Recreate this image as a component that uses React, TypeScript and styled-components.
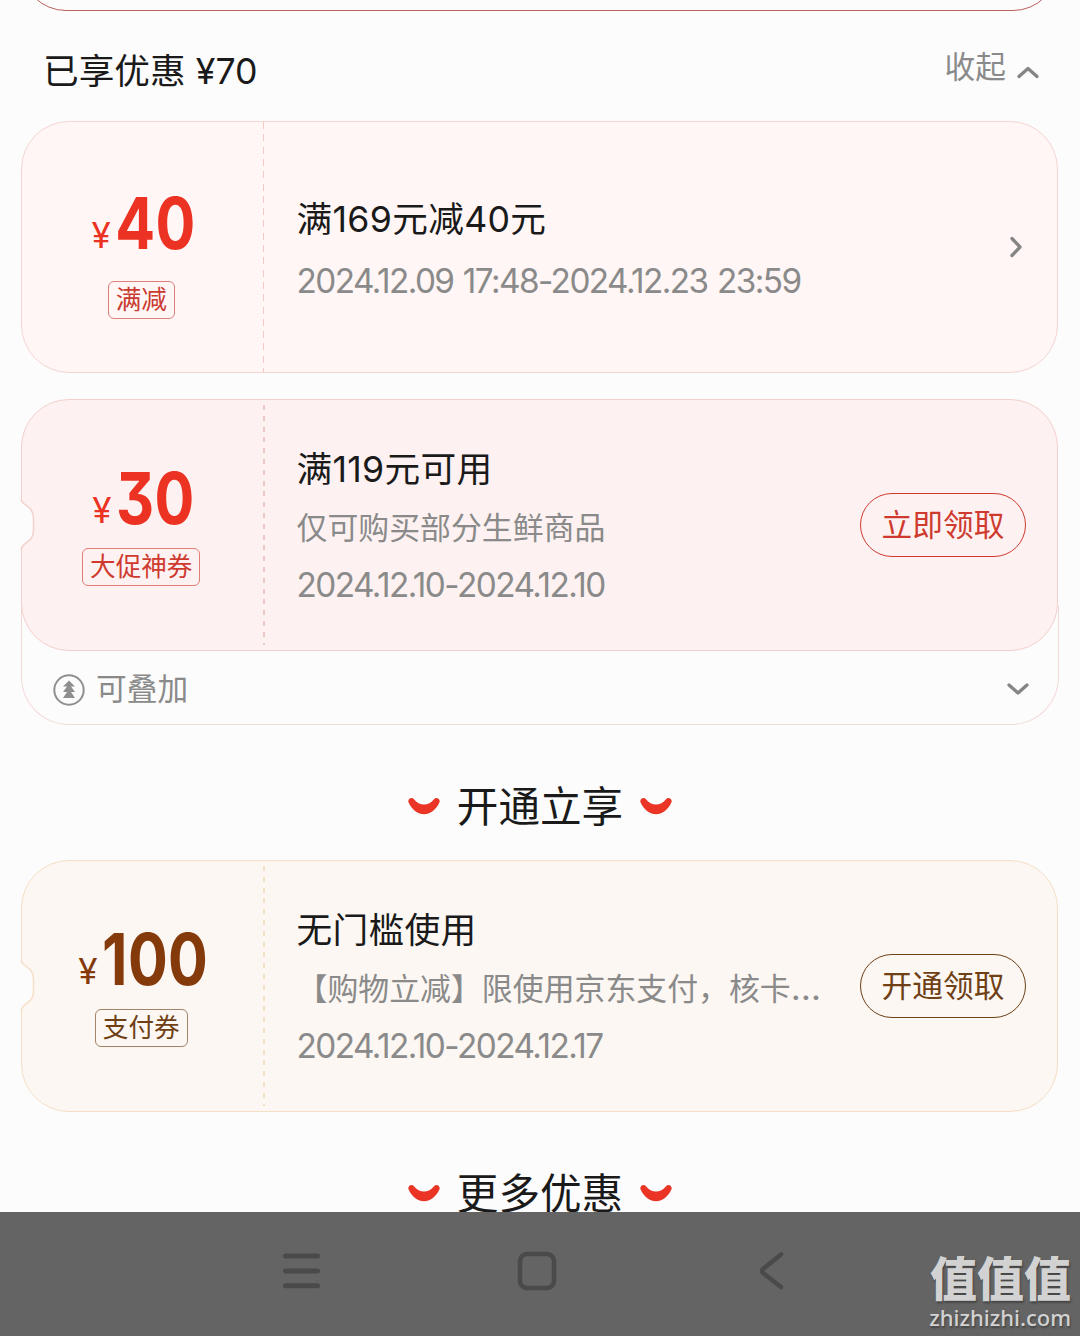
import React from 'react';
import styled, { createGlobalStyle, css } from 'styled-components';

const GlobalStyle = createGlobalStyle`
  * {
    box-sizing: border-box;
  }

  body {
    margin: 0;
    background: #fcfcfc;
    font-family: Inter, 'Noto Sans CJK SC', sans-serif;
    color: #1a1a1a;
  }
`;

const Screen = styled.div`
  width: 1080px;
  height: 1336px;
  display: flex;
  flex-direction: column;
  overflow: hidden;
`;

const Content = styled.main`
  height: 1212px;
  flex: none;
  overflow: hidden;
  padding: 0 22px 0 21px;
`;

const PreviousCard = styled.div`
  height: 110px;
  margin-top: -99px;
  border: 1.5px solid #b9625e;
  border-radius: 45px;
`;

const Header = styled.header`
  height: 110px;
  padding: 0 19px 0 22px;
  display: flex;
  justify-content: space-between;
`;

const HeaderTitle = styled.h2`
  margin: 0;
  height: 120px;
  line-height: 121px;
  font-size: 35.7px;
  font-weight: 400;
  white-space: pre;
`;

const Collapse = styled.div`
  height: 112px;
  display: flex;
  align-items: center;
  gap: 11px;
  font-size: 30.7px;
  line-height: 112px;
  color: #8a8a8a;

  svg {
    margin-top: 10px;
  }
`;

type Tone = 'plain' | 'red' | 'gold';

const tones = {
  plain: { bg: '#fff6f5', border: '#f4d5d1', dash: '#f2cbc7', main: '#ec3323', button: '#c93a30' },
  red: { bg: '#fdf2f1', border: '#f5cfcc', dash: '#edc9c5', main: '#ec3323', button: '#cf3a2f' },
  gold: { bg: '#fcf7f2', border: '#f6dfc6', dash: '#f4dfc7', main: '#843a0b', button: '#6f3f16' },
};

const Card = styled.section<{ $tone: Tone }>`
  position: relative;
  height: 252px;
  display: grid;
  grid-template-columns: 242.5px 1fr auto;
  background: ${p => tones[p.$tone].bg};
  border: 1.5px solid ${p => tones[p.$tone].border};
  border-radius: 48px;
`;

const StackWrap = styled.div`
  height: 326px;
  margin-top: 26px;

  ${Card} {
    z-index: 1;
  }
`;

const StackRow = styled.div`
  height: 119px;
  margin: -45px -1px 0 0;
  padding: 47px 29px 0 31px;
  border: 1px solid #f3d9d6;
  border-top: 0;
  border-radius: 0 0 48px 48px;
  display: flex;
  align-items: center;
  gap: 11px;
  font-size: 30.7px;
  line-height: 72px;
  color: #8a8a8a;

  svg:last-child {
    margin-left: auto;
  }
`;

const Stub = styled.div<{ $tone: Tone; $top: number }>`
  display: flex;
  flex-direction: column;
  align-items: center;
  padding: ${p => p.$top}px 4px 0 0;
  color: ${p => tones[p.$tone].main};
  background: ${p =>
    p.$tone === 'plain'
      ? css`repeating-linear-gradient(${tones.plain.dash} 0 7px, transparent 7px 12.3px) right 1px top 0 / 1px 100% no-repeat`
      : css`repeating-linear-gradient(${tones[p.$tone].dash} 0 5px, transparent 5px 10.8px) right 5px / 2px calc(100% - 10px) no-repeat`};
`;

// Digits are condensed horizontally, the currency sign is widened back
const Amount = styled.div`
  display: flex;
  align-items: baseline;
  height: 70px;
  margin-left: 6px;
  font-size: 72px;
  font-weight: 700;
  line-height: 70px;
  letter-spacing: 0.5px;
  font-feature-settings: 'cv09';
  transform: scaleX(0.82);
`;

const Yen = styled.span`
  display: inline-block;
  font-size: 35px;
  font-weight: 400;
  line-height: 66px;
  margin-right: 7px;
  transform: translateY(-1px) scaleX(1.22);
`;

const Tag = styled.span<{ $tone: Tone; $gap: number }>`
  height: 38px;
  margin-top: ${p => p.$gap}px;
  padding: 0 7px;
  border: 1px solid ${p => tones[p.$tone].button}a0;
  border-radius: 6px;
  font-size: 25.6px;
  line-height: 36px;
  color: ${p => tones[p.$tone].button};
`;

const Info = styled.div<{ $top: number; $gap?: number }>`
  display: flex;
  flex-direction: column;
  gap: ${p => p.$gap ?? 0}px;
  padding: ${p => p.$top}px 0 0 32px;
  min-width: 0;
`;

const Title = styled.h3`
  margin: 0;
  height: 60px;
  line-height: 59px;
  font-size: 35.7px;
  font-weight: 400;
  letter-spacing: 0.3px;
  white-space: nowrap;
`;

const Detail = styled.p<{ $date?: boolean }>`
  margin: 0;
  height: 57px;
  line-height: 56px;
  font-size: 30.9px;
  color: #8a8a8a;
  white-space: nowrap;

  ${p =>
    p.$date &&
    css`
      font-size: 33.3px;
      letter-spacing: -1.55px;
      word-spacing: 1.5px;
    `}
`;

const Ellipsis = styled.span`
  letter-spacing: 1px;
  font-size: 35px;
  line-height: 1;
`;

const Action = styled.div`
  display: flex;
  align-items: center;
  padding-right: 31px;
`;

const PillButton = styled.button<{ $tone: Tone }>`
  width: 166px;
  height: 64px;
  margin-top: -1px;
  padding: 1px 0 0;
  border: 1.3px solid currentColor;
  border-radius: 32px;
  background: transparent;
  font: inherit;
  font-size: 30.7px;
  line-height: 1;
  color: ${p => tones[p.$tone].button};
`;

const SectionTitle = styled.h2`
  margin: 0;
  display: flex;
  align-items: center;
  justify-content: center;
  gap: 16px;
  height: 135px;
  padding: 28px 0 0 1px;
  font-size: 41.6px;
  font-weight: 400;
  line-height: 60px;

  svg {
    margin-top: -1px;
  }
`;

const NotchSvg = styled.svg`
  position: absolute;
  left: -2px;
  top: 98px;
`;

const NavBar = styled.nav`
  position: relative;
  flex: 1;
  background: #646464;
  display: flex;
  padding: 39px 0 0 282px;
`;

const NavIcon = styled.svg<{ $gap?: number }>`
  margin-left: ${p => p.$gap ?? 0}px;
  fill: none;
  stroke: #4a4a4a;
  stroke-linecap: round;
  stroke-linejoin: round;
`;

const Watermark = styled.div`
  position: absolute;
  right: 9px;
  top: 37px;
  color: #d2d2d2;
  text-align: right;
  text-shadow: 1px 2px 2px #444;
`;

const WatermarkName = styled.div`
  height: 56px;
  font-family: 'Noto Sans CJK SC', sans-serif;
  font-size: 47px;
  font-weight: 900;
  line-height: 54px;
`;

const WatermarkSite = styled.div`
  font-family: 'Noto Sans', sans-serif;
  font-size: 22px;
  font-weight: 500;
  line-height: 24px;
`;

const Chevron = ({ d, w, h }: { d: string; w: number; h: number }) => (
  <svg width={w} height={h} fill="none" stroke="#858585" strokeWidth="3.3" strokeLinecap="round" strokeLinejoin="round">
    <path d={d} />
  </svg>
);

const Smile = () => (
  <svg width="34" height="20" fill="#ea3426">
    <path d="M1.6 6.5C0.2 3.6 4.2 0.4 7 3.2C12 10.4 22 10.4 27 3.2C29.8 0.4 33.8 3.6 32.4 6.5C25.5 22 8.5 22 1.6 6.5Z" />
  </svg>
);

const Notch = ({ tone }: { tone: Tone }) => (
  <NotchSvg width="16" height="54">
    <path d="M0 1H1.2C1.2 8 13.5 7 13.5 20V33C13.5 45 1.2 44 1.2 52H0Z" fill="#fcfcfc" />
    <path
      d="M1.2 1C1.2 8 13.5 7 13.5 20V33C13.5 45 1.2 44 1.2 52"
      fill="none"
      stroke={tones[tone].border}
      strokeWidth="1.5"
    />
  </NotchSvg>
);

const Section = ({ children }: { children: React.ReactNode }) => (
  <SectionTitle>
    <Smile />
    {children}
    <Smile />
  </SectionTitle>
);

export const App = () => (
  <Screen>
    <GlobalStyle />
    <Content>
      <PreviousCard />
      <Header>
        <HeaderTitle>已享优惠 ¥70</HeaderTitle>
        <Collapse>
          收起
          <Chevron w={22} h={14} d="M2 11.5L11 3.5L20 11.5" />
        </Collapse>
      </Header>

      <Card $tone="plain">
        <Stub $tone="plain" $top={66}>
          <Amount>
            <Yen>¥</Yen>40
          </Amount>
          <Tag $tone="plain" $gap={23}>满减</Tag>
        </Stub>
        <Info $top={68} $gap={3}>
          <Title>满169元减40元</Title>
          <Detail $date>2024.12.09 17:48-2024.12.23 23:59</Detail>
        </Info>
        <Action>
          <Chevron w={22} h={24} d="M8 3.5L16 12L8 20.5" />
        </Action>
      </Card>

      <StackWrap>
        <Card $tone="red">
          <Notch tone="red" />
          <Stub $tone="red" $top={63}>
            <Amount>
              <Yen>¥</Yen>30
            </Amount>
            <Tag $tone="red" $gap={15}>大促神券</Tag>
          </Stub>
          <Info $top={40}>
            <Title>满119元可用</Title>
            <Detail>仅可购买部分生鲜商品</Detail>
            <Detail $date>2024.12.10-2024.12.10</Detail>
          </Info>
          <Action>
            <PillButton $tone="red">立即领取</PillButton>
          </Action>
        </Card>
        <StackRow>
          <svg width="32" height="34" fill="none" stroke="#8f8f8f" strokeWidth="2">
            <circle cx="16" cy="18" r="14.7" />
            <path
              d="M16 8.5L22 14.5H18L22 20H18L22 26H10L14 20H10L14 14.5H10Z"
              fill="#8f8f8f"
              stroke="none"
            />
          </svg>
          可叠加
          <Chevron w={22} h={14} d="M2 3L11 11L20 3" />
        </StackRow>
      </StackWrap>

      <Section>开通立享</Section>

      <Card $tone="gold">
        <Notch tone="gold" />
        <Stub $tone="gold" $top={63}>
          <Amount>
            <Yen>¥</Yen>100
          </Amount>
          <Tag $tone="gold" $gap={15}>支付券</Tag>
        </Stub>
        <Info $top={40}>
          <Title>无门槛使用</Title>
          <Detail>
            【购物立减】限使用京东支付，核卡<Ellipsis>…</Ellipsis>
          </Detail>
          <Detail $date>2024.12.10-2024.12.17</Detail>
        </Info>
        <Action>
          <PillButton $tone="gold">开通领取</PillButton>
        </Action>
      </Card>

      <Section>更多优惠</Section>
    </Content>

    <NavBar>
      <NavIcon width="38" height="40" strokeWidth="5">
        <path d="M3.5 5H35.5M3.5 20H35.5M3.5 34.7H35.5" />
      </NavIcon>
      <NavIcon $gap={197} width="40" height="40" strokeWidth="4.5">
        <rect x="3" y="3" width="34" height="34" rx="7" />
      </NavIcon>
      <NavIcon $gap={201} width="26" height="40" strokeWidth="4.5">
        <path d="M23 3.5L5 18Q3 20 5 22L23 36" />
      </NavIcon>
      <Watermark>
        <WatermarkName>值值值</WatermarkName>
        <WatermarkSite>zhizhizhi.com</WatermarkSite>
      </Watermark>
    </NavBar>
  </Screen>
);

export default App;
